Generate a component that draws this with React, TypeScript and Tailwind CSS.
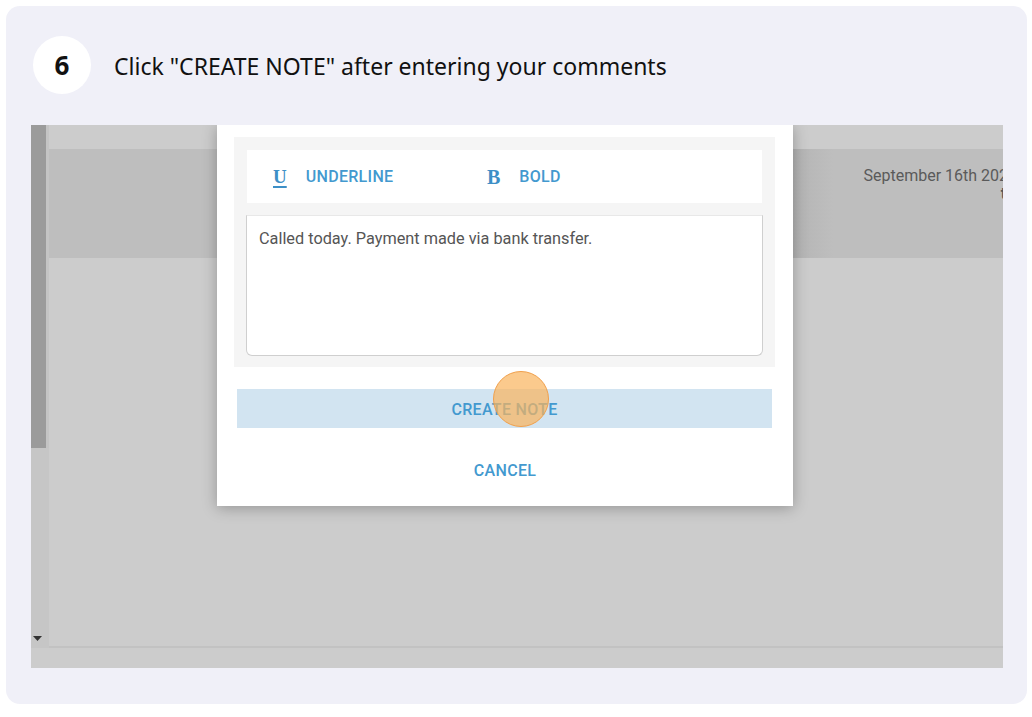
import React from "react";

export default function App() {
  return (
    <div className="w-[1032px] h-[717px] bg-white pt-[6px] pl-[6px]" style={{ fontFamily: '"Noto Sans", sans-serif' }}>
      <div className="w-[1021px] h-[698px] rounded-[14px] bg-[#f0f0f8] pl-[25px] pt-[30px]">
        <div className="flex items-center pl-[2px] h-[58px]">
          <div className="w-[58px] h-[58px] rounded-full bg-white flex items-center justify-center text-[26px] font-bold text-[#111]">
            6
          </div>
          <div className="ml-[23px] mt-[2px] text-[23px] text-[#111]">
            Click "CREATE NOTE" after entering your comments
          </div>
        </div>

        {/* screenshot */}
        <div className="relative mt-[31px] w-[972px] h-[543px] bg-[#cccccc] overflow-hidden flex flex-col" style={{ fontFamily: 'Roboto, sans-serif' }}>
          <div className="flex flex-1">
            {/* left scrollbar */}
            <div className="w-[18px] flex flex-col bg-[#c6c6c6]">
              <div className="h-[323px] flex">
                <div className="w-[15px] bg-[#9b9b9b]" />
                <div className="w-[3px] bg-[#c4c4c4]" />
              </div>
              <div className="flex-1 flex items-end justify-center pb-[7px] pr-[6px]">
                <svg width="9" height="5" viewBox="0 0 9 5"><path d="M0 0h9L4.5 5z" fill="#333" /></svg>
              </div>
            </div>
            {/* main content */}
            <div className="flex-1 flex flex-col">
              <div className="h-[24px]" />
              <div className="h-[109px] bg-[#bebebe] flex justify-end overflow-hidden">
                <div className="w-[210px] flex flex-col items-end pt-[18px] text-[16px] leading-[18px] text-[#5a5a5a] whitespace-nowrap overflow-hidden" style={{ background: 'linear-gradient(to right, #b4b4b4, #bebebe 40px)' }}>
                  <div className="-mr-[14px]">September 16th 2021</div>
                  <div className="-mr-[12px] font-bold text-[#555]">to</div>
                </div>
              </div>
              <div className="flex-1" />
              <div className="h-[2px] bg-[#c2c2c2]" />
            </div>
          </div>
          <div className="h-[20px] bg-[#cccccc]" />

          {/* modal */}
          <div className="absolute left-[186px] top-0 w-[576px] h-[381px] bg-white shadow-[0_2px_14px_rgba(0,0,0,0.28)] flex flex-col">
            <div className="mt-[12px] ml-[17px] w-[541px] h-[230px] bg-[#f5f5f5] px-[12px] pt-[13px] pb-[11px] flex flex-col">
              <div className="h-[53px] mx-[1px] bg-white flex items-center">
                <div className="w-[214px] flex items-center pl-[26px]">
                  <span className="text-[19px] font-bold text-[#3d8fc6] underline underline-offset-[3px] decoration-[1.5px] leading-none" style={{ fontFamily: '"Liberation Serif", serif' }}>U</span>
                  <span className="ml-[19px] text-[16px] font-medium text-[#4399cf] tracking-[0.3px]">UNDERLINE</span>
                </div>
                <div className="flex items-center pl-[26px]">
                  <span className="text-[20px] font-bold text-[#3d8fc6] leading-none" style={{ fontFamily: '"Liberation Serif", serif' }}>B</span>
                  <span className="ml-[19px] text-[16px] font-medium text-[#4399cf] tracking-[0.3px]">BOLD</span>
                </div>
              </div>
              <div className="mt-[12px] flex-1 bg-white border border-[#cfcfcf] border-t-[#e8e8e8] rounded-b-[6px] px-[12px] pt-[12px] text-[16.3px] text-[#555] leading-[22px]">
                Called today. Payment made via bank transfer.
              </div>
            </div>
            <div className="relative mt-[22px] ml-[20px] w-[535px] h-[39px] bg-[#d2e4f1] flex items-center justify-center pt-[2px] text-[16px] font-medium text-[#4399cf] tracking-[0.3px]">
              CREATE NOTE
              <div className="absolute left-[256px] top-[-18px] w-[56px] h-[56px] rounded-full bg-[#f9b45c]/70 border-[1.5px] border-[#f0a04c]" />
            </div>
            <div className="mt-[31px] flex justify-center text-[16px] font-medium text-[#4399cf] tracking-[0.3px]">
              CANCEL
            </div>
          </div>
        </div>
      </div>
    </div>
  );
}
